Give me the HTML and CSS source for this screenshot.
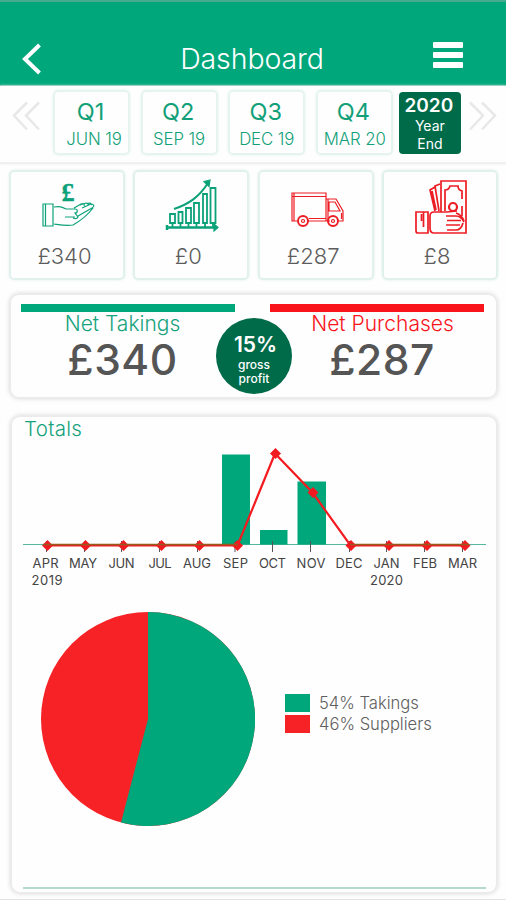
FILE: index.html
```html
<!DOCTYPE html>
<html lang="en">
<head>
  <meta charset="UTF-8">
  <meta name="viewport" content="width=device-width, initial-scale=1.0">
  <title>Dashboard</title>
  <link rel="stylesheet" href="styles.css">
</head>
<body>
  <header class="header">
    <svg class="back" width="20" height="32" viewBox="0 0 20 32"><path d="M18.500 2 L4 16 L18.500 30" /></svg>
    <h1>Dashboard</h1>
    <div class="menu"><span></span><span></span><span></span></div>
  </header>

  <nav class="periods">
    <svg class="arrows" width="28" height="30" viewBox="0 0 28 30"><path d="M15 1.5 L2 14.5 L15 28.5 M27 1.5 L14 14.5 L27 28.5" /></svg>
    <div class="quarter"><b>Q1</b><span class="jun">JUN 19</span></div>
    <div class="quarter"><b>Q2</b><span>SEP 19</span></div>
    <div class="quarter"><b>Q3</b><span>DEC 19</span></div>
    <div class="quarter"><b>Q4</b><span class="mar">MAR 20</span></div>
    <div class="year"><b>2020</b><span>Year</span><span>End</span></div>
    <svg class="arrows" width="28" height="30" viewBox="0 0 28 30"><path d="M1 1.5 L14 14.5 L1 28.5 M13 1.5 L26 14.5 L13 28.5" /></svg>
  </nav>

  <section class="cards">
    <div class="card">
      <svg class="green" width="60" height="60" viewBox="0 0 60 60">
        <text class="pound" x="30" y="27">£</text>
        <path d="M5 30h10v22H5z M7.5 30v22 M16 33c6-1 8 0 12 2h9c3 0 3 4 0 4l3 4c-1 2-3 2-5 1 M27 43h10 M40 42l14-8c3-2 2-4-1-4l-9 4 M36 34l7-4c3-1 4 0 3 2 M42 31l6-2c2 0 3 1 2 2 M49 30c3-2 5 0 4 1 M55 34c-6 8-13 13-20 17-7 1-12 0-19-1" />
      </svg>
      <p>£340</p>
    </div>
    <div class="card">
      <svg class="green" width="60" height="60" viewBox="1 0 60 60">
        <path d="M6 53.5h47 M6 51v5" stroke-width="2.5" />
        <path d="M53 50l4 3.5-4 3.500z M49 6l-6 1.500 5 5z" fill="currentColor" />
        <path d="M13 35C28 30 38 23 47 9" stroke-width="2" />
        <path d="M9 40h5v9H9z M17.500 38h4v11h-4z M25 34h5v15h-5z M33 29h5v20h-5z M42 20h4v29h-4z M49.500 14h5v35h-5z M11.500 49v4 M19.500 49v4 M27.500 49v4 M35.500 49v4 M44 49v4 M52 49v4" stroke-width="1.800" />
      </svg>
      <p class="zero">£0</p>
    </div>
    <div class="card">
      <svg class="red" width="60" height="60" viewBox="0 1 60 60">
        <path d="M10 48H5V20h34v28H21 M5 23.500h34 M7 20v28 M39 26h10l7 12v10h-4 M42 38V29h6l5 9z M39 48h4 M41 26v22 M22 45.500h17 M54.500 40v6" />
        <circle cx="16" cy="48" r="5" stroke-width="2" /><circle cx="16" cy="48" r="1.500" />
        <circle cx="46" cy="48" r="5" stroke-width="2" /><circle cx="46" cy="48" r="1.500" />
      </svg>
      <p>£287</p>
    </div>
    <div class="card">
      <svg class="red" width="60" height="60" viewBox="-2 0 60 60">
        <g stroke-width="1.700">
          <path d="M28 38V7h25v52H21c-4 0-4-3-4-5V42c0-3 2-4 4-4h13l10-1 M3 38h12v21H5q-2 0-2-2z M8.500 40v7 M10.500 38v15 M32 37V16q4 0 5-4h8q0 4 4 5v8 M49 32v10" />
          <circle cx="40" cy="33" r="4" stroke-width="2.200" />
          <path d="M33 42h10c4 0 6 2 8 6 M34 46.500h14 M33 51h14 M34 56h9q5 0 7-7 M27 10l-5 2 4 25 M22 13l-5 3 5 21 M19 17l4 19 M43 39q6 2 8 8" />
        </g>
      </svg>
      <p class="zero">£8</p>
    </div>
  </section>

  <section class="net">
    <div class="side takings"><h2>Net Takings</h2><p>£340</p></div>
    <div class="side purchases"><h2>Net Purchases</h2><p>£287</p></div>
    <div class="profit"><b>15%</b><span>gross</span><span>profit</span></div>
  </section>

  <section class="totals">
    <h2>Totals</h2>
    <svg class="chart" width="485" height="154" viewBox="12 440 485 154">
      <path class="axis" d="M23 544.500H486" />
      <path class="bar" d="M222 454.500h28v90h-28z M260 530h27.500v14.500H260z M297.500 481.500H326v63h-28.500z" />
      <path class="tick" d="M46.500 541v11 M84.500 541v11 M121.500 541v11 M159.500 541v11 M197.500 541v11 M235 541v11 M272.500 541v11 M310.500 541v11 M349.500 541v11 M386.500 541v11 M424.500 541v11 M462.500 541v11" />
      <path class="line" d="M47 545.500H237.500L275 453.500 312.500 492.500 350.500 545.500H465" />
      <path class="dot" d="M47.500 540l5.500 5.500-5.500 5.500-5.500-5.500z m38 0l5.500 5.500-5.500 5.500-5.500-5.500z m38 0l5.500 5.500-5.500 5.500-5.500-5.500z m38 0l5.500 5.500-5.500 5.500-5.500-5.500z m38 0l5.500 5.500-5.500 5.500-5.500-5.500z m38 0l5.500 5.500-5.500 5.500-5.500-5.500z m38-92l5.500 5.500-5.500 5.500-5.500-5.500z m37.500 39l5.500 5.500-5.500 5.500-5.500-5.500z m38 53l5.500 5.500-5.500 5.500-5.500-5.500z m38 0l5.500 5.500-5.500 5.500-5.500-5.500z m38 0l5.500 5.500-5.500 5.500-5.500-5.500z m38 0l5.500 5.500-5.500 5.500-5.500-5.500z" />
      <path class="base" d="M43 544.500H238 M350 544.500H469" />
      <g class="months">
        <text x="45.500" y="568" textLength="26">APR</text>
        <text x="83" y="568" textLength="28">MAY</text>
        <text x="121.500" y="568" textLength="26">JUN</text>
        <text x="160" y="568" textLength="23">JUL</text>
        <text x="197" y="568" textLength="28">AUG</text>
        <text x="235.500" y="568" textLength="25">SEP</text>
        <text x="272.500" y="568" textLength="27">OCT</text>
        <text x="311" y="568" textLength="29">NOV</text>
        <text x="349" y="568" textLength="27">DEC</text>
        <text x="386.500" y="568" textLength="26">JAN</text>
        <text x="425" y="568" textLength="24">FEB</text>
        <text x="462.500" y="568" textLength="29">MAR</text>
        <text x="47" y="585" textLength="31">2019</text>
        <text x="386.500" y="585" textLength="33">2020</text>
      </g>
    </svg>
    <div class="share">
      <svg width="214" height="214" viewBox="-107 -107 214 214">
        <circle r="107" fill="#f62226" />
        <path d="M0 0V-107A107 107 0 1 1 -27 103.500z" fill="#00a77b" />
      </svg>
      <ul class="legend">
        <li><i class="swatch"></i><span>54% Takings</span></li>
        <li><i class="swatch suppliers"></i><span>46% Suppliers</span></li>
      </ul>
    </div>
  </section>
</body>
</html>
```
FILE: styles.css
```css
* {
  box-sizing: border-box;
}
body {
  margin: 0;
  height: 900px;
  overflow: hidden;
  background: #fefefe;
  border-bottom: 1px solid #e3e3e3;
  font-family: Inter, "Liberation Sans", sans-serif;
  color: #555;
}
h1, h2, p, ul {
  margin: 0;
  padding: 0;
  font-weight: 400;
}
svg {
  display: block;
  fill: none;
}
.header {
  height: 86px;
  padding: 0 43px 0 21px;
  display: flex;
  justify-content: space-between;
  background: #00a77b;
  border-top: 2px solid #45ab8e;
  border-bottom: 1px solid #68bda3;
  color: #fff;
}
.back {
  margin-top: 41px;
  stroke: #fff;
  stroke-width: 4;
}
.header h1 {
  margin: 39px 0 0 30px;
  font-size: 28.5px;
  line-height: 36px;
  font-weight: 350;
  letter-spacing: -0.1px;
}
.menu {
  width: 30px;
  margin-top: 40px;
}
.menu span {
  display: block;
  height: 6px;
  margin-bottom: 4px;
  border-radius: 1px;
  background: #fff;
}
.periods {
  height: 78px;
  padding: 4px 6px 0 12px;
  display: flex;
  border-bottom: 2px solid #f0f0f0;
  box-shadow: 0 0 3px #eee;
}
.arrows {
  margin-top: 11px;
  stroke: #e8e8e8;
  stroke-width: 2.5;
}
.quarter {
  width: 77px;
  height: 65px;
  margin-right: 10.6px;
  padding-top: 6px;
  border: 2px solid #e6f4f0;
  border-radius: 5px;
  box-shadow: 0 0 3px #e4f3ef;
  text-align: center;
  color: #12a078;
}
.arrows + .quarter {
  margin-left: 13px;
}
.quarter b, .quarter span {
  display: block;
  font-weight: 400;
  white-space: nowrap;
}
.quarter b {
  padding-right: 2px;
  font-size: 23.5px;
  line-height: 28px;
}
.quarter span {
  font-size: 16.8px;
  line-height: 26px;
  font-weight: 350;
  letter-spacing: -0.1px;
}
.quarter .jun {
  padding-left: 5px;
}
.quarter .mar {
  padding-left: 1px;
}
.year {
  width: 62px;
  height: 62px;
  margin: 2px 8px 0 -4px;
  border-radius: 4px;
  background: #006b49;
  color: #fff;
  text-align: center;
}
.year b {
  display: block;
  padding: 3px 3px 0 0;
  font-size: 19px;
  line-height: 22px;
  font-weight: 600;
}
.year span {
  display: block;
  padding-right: 1px;
  font-size: 14px;
  line-height: 18px;
}
.cards {
  display: grid;
  grid-template-columns: repeat(4, 116px);
  justify-content: space-between;
  padding: 6px 8px 0 9px;
}
.card {
  height: 110px;
  padding: 2px 0 0 27px;
  border: 2px solid #e0f1ed;
  border-radius: 5px;
  box-shadow: 0 0 3px #e2f1ee;
}
.card svg {
  overflow: visible;
  stroke: currentColor;
  stroke-width: 1.2;
}
.green {
  color: #0ba279;
}
.red {
  color: #ed1c24;
}
.card .pound {
  font: 700 26px "Liberation Serif", serif;
  fill: currentColor;
  stroke-width: 0.4;
}
.card p {
  margin: 9px 0 0 -27px;
  padding-right: 5px;
  text-align: center;
  font-size: 22px;
  line-height: 27px;
  font-weight: 350;
  color: #5c5c5c;
}
.card .zero {
  padding-right: 6px;
}
.net {
  position: relative;
  height: 106px;
  margin: 13px 8px 0 9px;
  padding: 9px 12px 0 10px;
  display: flex;
  justify-content: space-between;
  border: 2px solid #ebebeb;
  border-radius: 10px;
  box-shadow: 0 0 4px #ddd;
}
.side {
  width: 214px;
  text-align: center;
}
.takings {
  border-top: 8px solid #00a77b;
  padding-right: 11px;
}
.purchases {
  border-top: 8px solid #f8141a;
  padding-left: 11px;
}
.side h2 {
  font-size: 21px;
  line-height: 24px;
  font-weight: 350;
  color: #16a37d;
}
.purchases h2 {
  color: #f8141a;
}
.side p {
  font-size: 42.5px;
  line-height: 48px;
  font-weight: 500;
  letter-spacing: 0.5px;
  color: #555;
}
.purchases p {
  padding-right: 1px;
}
.profit {
  position: absolute;
  left: 205px;
  top: 23px;
  width: 76px;
  height: 76px;
  padding-top: 14px;
  border-radius: 50%;
  background: #006b49;
  color: #fff;
  text-align: center;
  font-size: 12px;
  font-weight: 500;
}
.profit b {
  display: block;
  padding-left: 3px;
  font-size: 21px;
  line-height: 26px;
  font-weight: 600;
}
.profit span {
  display: block;
  line-height: 14px;
}
.totals {
  position: relative;
  height: 479px;
  margin: 16px 8px 0 10px;
  border: 2px solid #ebebeb;
  border-radius: 10px;
  box-shadow: 0 0 4px #ddd;
}
.totals::after {
  content: "";
  position: absolute;
  left: 11px;
  right: 10px;
  bottom: 3px;
  height: 2px;
  background: #b4dacf;
}
.totals h2 {
  padding: 0 0 0 12px;
  font-size: 20.5px;
  line-height: 23px;
  font-weight: 350;
  letter-spacing: 0.3px;
  color: #16a37d;
}
.chart {
  width: 485px;
}
.axis {
  stroke: #55b79b;
}
.bar {
  fill: #00a77b;
}
.tick {
  stroke: #555;
}
.line {
  stroke: #f31a20;
  stroke-width: 2.2;
}
.base {
  stroke: #935b20;
  stroke-width: 1.5;
}
.dot {
  fill: #f01b20;
}
.months text, .pound {
  text-anchor: middle;
}
.months {
  font-size: 13px;
  fill: #444;
}
.share {
  display: flex;
  align-items: flex-start;
  padding: 18px 0 0 29px;
}
.legend {
  margin: 81px 0 0 30px;
  list-style: none;
}
.legend li {
  display: flex;
  align-items: center;
  height: 20.5px;
  font-size: 16.6px;
  font-weight: 350;
  color: #606060;
}
.swatch {
  width: 25px;
  height: 18px;
  margin-right: 9px;
  background: #00a77b;
}
.suppliers {
  background: #f62226;
}
```
